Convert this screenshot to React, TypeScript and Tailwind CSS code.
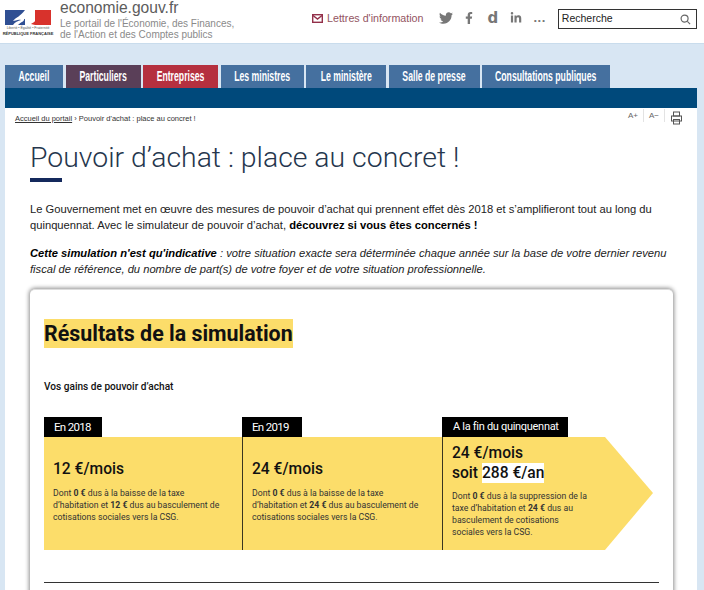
import React from "react";
import { FaTwitter, FaFacebookF, FaLinkedinIn } from "react-icons/fa";

const tabs = [
  { label: "Accueil", w: "w-[58px]", bg: "bg-[#45709f]" },
  { label: "Particuliers", w: "w-[75px]", bg: "bg-[#5a3f58]" },
  { label: "Entreprises", w: "w-[75px]", bg: "bg-[#b5303f]" },
  { label: "Les ministres", w: "w-[83px]", bg: "bg-[#45709f]" },
  { label: "Le ministère", w: "w-[80px]", bg: "bg-[#45709f]" },
  { label: "Salle de presse", w: "w-[91px]", bg: "bg-[#45709f]" },
  { label: "Consultations publiques", w: "w-[128px]", bg: "bg-[#45709f]" },
];

function Logo() {
  return (
    <div className="w-[46px] flex flex-col items-center">
      <svg width="46" height="15" viewBox="0 0 46 15">
        <rect x="0" y="0" width="46" height="15" fill="#fff" />
        <rect x="0" y="0" width="20" height="15" fill="#2f4f93" />
        <rect x="30" y="0" width="16" height="15" fill="#d8322c" />
        <path d="M20 0 L23 0 C22 3 21 5 20 6 C22 7 21 9 19 9 C20 11 16 12 13 15 L8 15 C10 12 13 11 16 10 C13 9 10 11 8 11 C10 8 16 6 20 0Z" fill="#fff" />
        <path d="M30 0 L31 10 C30 12 27 13 26 14 L30 15 L30 0Z" fill="#d8322c" />
      </svg>
      <div className="text-[3.5px] leading-[5px] text-[#555] font-['Liberation_Sans',sans-serif] mt-[1px] whitespace-nowrap">Liberté • Égalité • Fraternité</div>
      <div className="text-[4px] leading-[5px] font-bold text-[#333] font-['Liberation_Sans',sans-serif] whitespace-nowrap">RÉPUBLIQUE FRANÇAISE</div>
    </div>
  );
}

function Header() {
  return (
    <header className="h-[44px] bg-white flex items-start border-b border-[#c9dcec] pl-[5px] font-['Liberation_Sans',sans-serif]">
      <div className="mt-[10px]"><Logo /></div>
      <div className="ml-[9px] -mt-[1px] w-[230px]">
        <div className="text-[15.6px] leading-[18px] text-[#5c5c5c]">economie.gouv.fr</div>
        <div className="text-[10px] leading-[11px] text-[#8a8a8a] mt-[1px]">Le portail de l'Économie, des Finances,<br />de l'Action et des Comptes publics</div>
      </div>
      <div className="ml-[22px] mt-[12px] flex items-center h-[13px] text-[#93545f] text-[10.7px] whitespace-nowrap">
        <svg width="11" height="9" viewBox="0 0 11 9" fill="none" stroke="#93304a" strokeWidth="1.4" className="mr-[4px]">
          <rect x="0.7" y="0.7" width="9.6" height="7.6" />
          <path d="M1 1.5 L5.5 5 L10 1.5" />
        </svg>
        Lettres d'information
      </div>
      <div className="ml-[15px] mt-[11px] flex items-center h-[14px] text-[#777]">
        <FaTwitter size={14} className="mr-[10px]" />
        <FaFacebookF size={12} className="mr-[13px]" />
        <span className="w-[9px] text-[15px] leading-[15px] font-bold font-['DejaVu_Sans',sans-serif] mr-[13px] text-center">d</span>
        <FaLinkedinIn size={12} className="mr-[12px]" />
        <span className="text-[13px] leading-[15px] font-bold tracking-[0.5px] -mt-[2px]">...</span>
      </div>
      <div className="ml-[12px] mt-[9px] w-[139px] h-[20px] border border-[#333] flex items-center justify-between pl-[3px] pr-[5px] text-[10.5px] text-[#222]">
        Recherche
        <svg width="11" height="11" viewBox="0 0 12 12" fill="none" stroke="#666" strokeWidth="1.3">
          <circle cx="5" cy="5" r="3.8" />
          <path d="M8 8 L11 11" />
        </svg>
      </div>
    </header>
  );
}

function Nav() {
  return (
    <nav>
      <div className="flex gap-[2.5px] pt-[21px] font-['Liberation_Sans',sans-serif]">
        {tabs.map((t) => (
          <div key={t.label} className={`${t.w} ${t.bg} h-[23px] flex items-center justify-center text-white font-bold text-[14px] whitespace-nowrap`}>
            <span className="inline-block scale-x-[0.62]">{t.label}</span>
          </div>
        ))}
      </div>
      <div className="h-[20px] bg-[#00497b]" />
    </nav>
  );
}

function Col({ tag, tagW, value, children, w, border }: { tag: string; tagW: string; value: string; children: React.ReactNode; w: string; border?: boolean }) {
  return (
    <div className={w}>
      <div className={`${tagW} h-[20px] bg-black text-white text-[11.5px] tracking-[-0.7px] leading-[20px] pl-[10px]`}>{tag}</div>
      <div className={`h-[113px] bg-[#fcdd6a] pl-[9px] pt-[22px] ${border ? "border-l border-[#3a3520]" : ""}`}>
        <div className="text-[15.6px] leading-[20px] font-medium text-[#111]">{value}</div>
        <div className="text-[8.7px] leading-[12px] text-[#333] mt-[8px]">{children}</div>
      </div>
    </div>
  );
}

export default function App() {
  return (
    <div className="h-[590px] w-[704px] overflow-hidden bg-[#d8e6f3]">
      <Header />
      <div className="pl-[5px] w-[697px]">
        <Nav />
        <main className="bg-white h-[490px] pl-[25px]">
          <div className="flex items-start justify-between h-[24px] pr-[15px] -ml-[15px] font-['Liberation_Sans',sans-serif]">
            <div className="text-[7.5px] leading-[9px] text-[#333] mt-[6px]">
              <span className="underline">Accueil du portail</span> › Pouvoir d'achat : place au concret !
            </div>
            <div className="flex items-start text-[8px] text-[#666] mt-[1px]">
              <span className="w-[21px] h-[13px] leading-[13px] text-center border-r border-[#e3e3e3]">A+</span>
              <span className="w-[21px] h-[13px] leading-[13px] text-center border-r border-[#e3e3e3]">A−</span>
              <svg width="11" height="14" viewBox="0 0 11 14" fill="none" stroke="#555" strokeWidth="1" className="ml-[6px] mt-[2px]">
                <rect x="2.5" y="1" width="6" height="4" />
                <rect x="0.5" y="5" width="10" height="5" />
                <rect x="2.5" y="8.5" width="6" height="4.5" />
              </svg>
            </div>
          </div>
          <h1 className="text-[28.4px] leading-[36px] font-light text-[#25364d] font-['Roboto',sans-serif] mt-[8px]">Pouvoir d’achat : place au concret !</h1>
          <div className="w-[32px] h-[4px] bg-[#14295c] mt-[2px]" />
          <div className="font-['Liberation_Sans',sans-serif] text-[11.2px] leading-[16px] text-[#222] whitespace-nowrap">
            <p className="mt-[19px]">
              Le Gouvernement met en œuvre des mesures de pouvoir d’achat qui prennent effet dès 2018 et s’amplifieront tout au long du<br />
              quinquennat. Avec le simulateur de pouvoir d’achat, <b className="text-black">découvrez si vous êtes concernés !</b>
            </p>
            <p className="mt-[12px] italic">
              <b className="text-black">Cette simulation n'est qu'indicative</b> : votre situation exacte sera déterminée chaque année sur la base de votre dernier revenu<br />
              fiscal de référence, du nombre de part(s) de votre foyer et de votre situation professionnelle.
            </p>
          </div>
          <section className="w-[643px] h-[400px] mt-[12px] bg-white rounded-[5px] border-t border-[#ddd] shadow-[0_0_4px_1px_rgba(0,0,0,0.45)] px-[14px] pt-[29px] font-['Roboto',sans-serif]">
            <h2 className="text-[21.4px] leading-[29px] font-bold text-[#111]">
              <span className="bg-[#fcdd6a] inline-block h-[29px]">Résultats de la simulation</span>
            </h2>
            <div className="text-[10.1px] leading-[14px] font-medium text-[#111] mt-[32px]">Vos gains de pouvoir d’achat</div>
            <div className="flex mt-[23px]">
              <Col w="w-[198px]" tag="En 2018" tagW="w-[58px]" value="12 €/mois">
                Dont <b>0 €</b> dus à la baisse de la taxe<br />d’habitation et <b>12 €</b> dus au basculement de<br />cotisations sociales vers la CSG.
              </Col>
              <Col w="w-[200px]" tag="En 2019" tagW="w-[60px]" value="24 €/mois" border>
                Dont <b>0 €</b> dus à la baisse de la taxe<br />d’habitation et <b>24 €</b> dus au basculement de<br />cotisations sociales vers la CSG.
              </Col>
              <div className="w-[212px]">
                <div className="w-[126px] h-[20px] bg-black text-white text-[11px] tracking-[-0.3px] leading-[20px] pl-[11px] whitespace-nowrap">A la fin du quinquennat</div>
                <div className="h-[113px] bg-[#fcdd6a] [clip-path:polygon(0_0,163px_0,211px_56px,163px_113px,0_113px)] border-l border-[#3a3520] pl-[9px]">
                  <div className="text-[15.6px] leading-[20px] font-medium text-[#111] pt-[6px]">
                    24 €/mois
                    <div>soit <span className="bg-white inline-block h-[20px]">288 €/an</span></div>
                  </div>
                  <div className="text-[8.7px] leading-[12px] text-[#333] mt-[7px]">
                    Dont <b>0 €</b> dus à la suppression de la<br />taxe d’habitation et <b>24 €</b> dus au<br />basculement de cotisations<br />sociales vers la CSG.
                  </div>
                </div>
              </div>
            </div>
            <div className="h-px bg-[#333] mt-[32px]" />
          </section>
        </main>
      </div>
    </div>
  );
}
